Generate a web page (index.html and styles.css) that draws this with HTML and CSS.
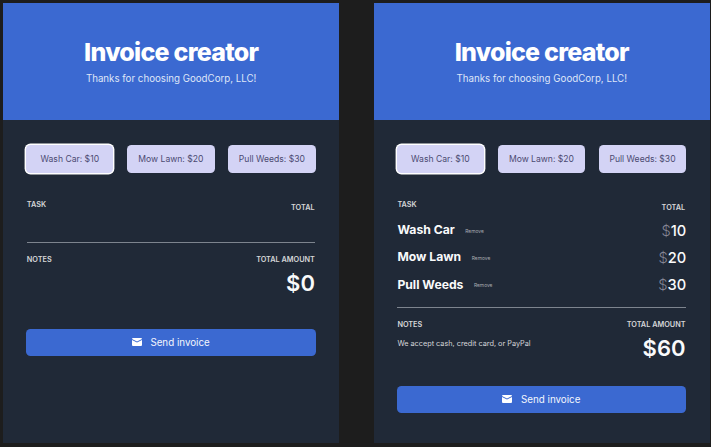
FILE: index.html
```
<!DOCTYPE html>
<html lang="en">
<head>
<meta charset="utf-8">
<title>Invoice creator</title>
<link rel="stylesheet" href="styles.css">
</head>
<body>
<main class="board">
  <section class="invoice">
    <header class="hero">
      <h1>Invoice creator</h1>
      <p>Thanks for choosing GoodCorp, LLC!</p>
    </header>
    <div class="content">
      <div class="services">
        <button class="service selected">Wash Car: $10</button>
        <button class="service">Mow Lawn: $20</button>
        <button class="service">Pull Weeds: $30</button>
      </div>
      <div class="headings">
        <h2>TASK</h2>
        <h2 class="total-heading">TOTAL</h2>
      </div>
      <ul class="tasks empty"></ul>
      <div class="summary">
        <div class="notes">
          <h3>NOTES</h3>
        </div>
        <div class="amount">
          <h3>TOTAL AMOUNT</h3>
          <strong>$0</strong>
        </div>
      </div>
      <button class="send">
        <svg viewBox="0 0 20 16" class="mail"><path d="M2 0h16a2 2 0 0 1 2 1.900L10 7 0 1.900A2 2 0 0 1 2 0z"/><path d="M0 4.100l10 5.100 10-5.100V14a2 2 0 0 1-2 2H2a2 2 0 0 1-2-2z"/></svg>
        <span>Send invoice</span>
      </button>
    </div>
  </section>

  <section class="invoice">
    <header class="hero">
      <h1>Invoice creator</h1>
      <p>Thanks for choosing GoodCorp, LLC!</p>
    </header>
    <div class="content">
      <div class="services">
        <button class="service selected">Wash Car: $10</button>
        <button class="service">Mow Lawn: $20</button>
        <button class="service">Pull Weeds: $30</button>
      </div>
      <div class="headings">
        <h2>TASK</h2>
        <h2 class="total-heading">TOTAL</h2>
      </div>
      <ul class="tasks">
        <li><span class="name">Wash Car</span><a class="remove">Remove</a><span class="price"><i>$</i>10</span></li>
        <li><span class="name">Mow Lawn</span><a class="remove">Remove</a><span class="price"><i>$</i>20</span></li>
        <li><span class="name">Pull Weeds</span><a class="remove">Remove</a><span class="price"><i>$</i>30</span></li>
      </ul>
      <div class="summary">
        <div class="notes">
          <h3>NOTES</h3>
          <p>We accept cash, credit card, or PayPal</p>
        </div>
        <div class="amount">
          <h3>TOTAL AMOUNT</h3>
          <strong>$60</strong>
        </div>
      </div>
      <button class="send">
        <svg viewBox="0 0 20 16" class="mail"><path d="M2 0h16a2 2 0 0 1 2 1.900L10 7 0 1.900A2 2 0 0 1 2 0z"/><path d="M0 4.100l10 5.100 10-5.100V14a2 2 0 0 1-2 2H2a2 2 0 0 1-2-2z"/></svg>
        <span>Send invoice</span>
      </button>
    </div>
  </section>
</main>
</body>
</html>
```
FILE: styles.css
```
* {
  box-sizing: border-box;
  margin: 0;
  padding: 0;
}

body {
  background: #1d1d1d;
  font-family: Inter, sans-serif;
  overflow: hidden;
}

button {
  font-family: inherit;
  border: 0;
}

.board {
  display: flex;
  gap: 34.3px;
  padding: 3.4px 0 0 3px;
  height: 447px;
}

.invoice {
  flex: none;
  width: 336.3px;
  height: 439.3px;
  background: #202937;
}

.hero {
  height: 116.2px;
  padding-top: 33.6px;
  background: #3b69d1;
  color: #fff;
  text-align: center;
}

h1 {
  font-size: 25px;
  line-height: 30px;
  font-weight: 800;
  letter-spacing: -0.75px;
}

.hero p {
  margin-top: 6.2px;
  font-size: 9.72px;
  line-height: 12px;
  color: #dfe6f8;
}

.content {
  padding: 25px 23.7px 0 23.1px;
}

.services {
  display: flex;
  justify-content: space-between;
  height: 28.2px;
}

.service {
  width: 87.4px;
  padding-top: 1px;
  border-radius: 4.5px;
  background: #d3d3f5;
  color: #4b4a71;
  font-size: 8.6px;
  line-height: 10px;
}

.selected {
  box-shadow: 0 0 0 1.4px #fff;
}

.headings {
  display: flex;
  justify-content: space-between;
  height: 16px;
  margin: 27.6px 1px 0 0.7px;
}

h2,
h3 {
  font-size: 7.3px;
  line-height: 10px;
  font-weight: 600;
  color: #d5d6d8;
}

.total-heading {
  padding-top: 2.5px;
}

.tasks {
  display: flex;
  flex-direction: column;
  margin: 0 0 8.700px 0.7px;
  list-style: none;
}

.empty {
  height: 17px;
}

.tasks li {
  display: flex;
  align-items: center;
  height: 27.3px;
}

.name {
  font-size: 12.2px;
  line-height: 16px;
  font-weight: 700;
  color: #f9fafb;
}

.remove {
  flex: 1;
  margin-left: 10.500px;
  padding-top: 1px;
  font-size: 4.9px;
  line-height: 6px;
  color: #a9acb2;
}

.price {
  padding-top: 1px;
  font-size: 14.67px;
  line-height: 18px;
  font-weight: 500;
  color: #f9fafb;
}

.price i {
  font-style: normal;
  font-weight: 300;
  color: #858694;
}

.summary {
  display: flex;
  justify-content: space-between;
  height: 86.5px;
  margin: 0 0.7px;
  padding-top: 11.8px;
  border-top: 1px solid #7d848e;
}

.notes p {
  margin-top: 9px;
  font-size: 7.3px;
  line-height: 10px;
  color: #d5d6d8;
}

.amount {
  text-align: right;
}

.amount strong {
  display: block;
  margin-top: 5.2px;
  font-size: 22px;
  line-height: 27px;
  font-weight: 600;
  color: #f9fafb;
}

.send {
  display: flex;
  align-items: center;
  justify-content: center;
  gap: 8.5px;
  width: 100%;
  height: 27px;
  border-radius: 4.5px;
  background: #3b69d1;
  color: #f3f6fd;
  font-size: 9.8px;
  line-height: 12px;
}

.send span {
  padding-top: 1px;
}

.tasks:not(.empty) + .summary {
  height: 79px;
}

.mail {
  width: 10px;
  height: 8px;
  fill: #fff;
}
```
